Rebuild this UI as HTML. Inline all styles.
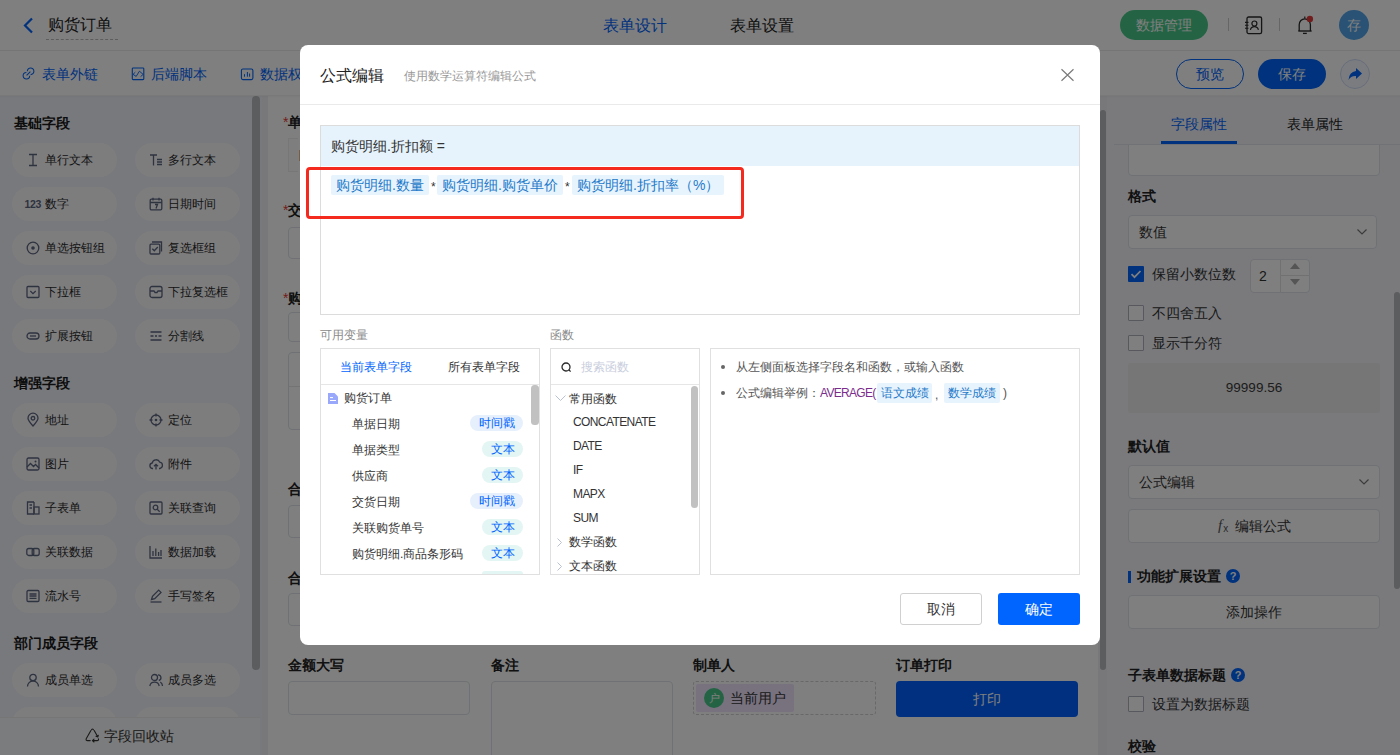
<!DOCTYPE html>
<html><head><meta charset="utf-8">
<style>
*{box-sizing:border-box;margin:0;padding:0}
html,body{width:1400px;height:755px;overflow:hidden;background:#fff;font-family:"Liberation Sans",sans-serif;color:#333;font-size:13px}
.a{position:absolute}
svg{display:block;position:absolute;overflow:visible}
.pill{position:absolute;width:105px;height:34px;border-radius:17px;background:#fbfbfd}
.inp{position:absolute;border:1px solid #dfe2e8;border-radius:4px;background:#fff}
</style></head><body>

<div class="a" style="left:0;top:0;width:1400px;height:51px;background:#fff;border-bottom:1px solid #ebebeb"></div>
<svg style="left:22px;top:17px" width="14" height="17" viewBox="0 0 14 17"><path d="M10 1.5 L3 8.5 L10 15.5" fill="none" stroke="#0064fa" stroke-width="2.2"/></svg>
<div class="a" style="left:48px;top:14.0px;font-size:16px;line-height:22px;color:#222;white-space:nowrap;">购货订单</div>
<div class="a" style="left:46px;top:39px;width:72px;border-top:1px dashed #bbb"></div>
<div class="a" style="left:603px;top:15.0px;font-size:16px;line-height:22px;color:#0064fa;white-space:nowrap;">表单设计</div>
<div class="a" style="left:730px;top:15.0px;font-size:16px;line-height:22px;color:#222;white-space:nowrap;">表单设置</div>
<div class="a" style="left:1120px;top:10px;width:88px;height:30px;border-radius:15px;background:#48c98a;color:#fff;font-size:14px;line-height:30px;text-align:center">数据管理</div>
<div class="a" style="left:1228px;top:18px;width:1px;height:13px;background:#ccc"></div>
<svg style="left:1244px;top:16px" width="19" height="19" viewBox="0 0 19 19"><rect x="3" y="1" width="14.6" height="16.6" rx="1.6" fill="none" stroke="#2a2a2a" stroke-width="1.3"/><circle cx="10.4" cy="7.5" r="2.5" fill="none" stroke="#2a2a2a" stroke-width="1.2"/><path d="M6.4 13.8 A4.1 4.1 0 0 1 14.4 13.8" fill="none" stroke="#2a2a2a" stroke-width="1.2"/><path d="M1 6.4h3.5M1 9.3h3.5M1 12.3h3.5" stroke="#2a2a2a" stroke-width="1.1"/></svg>
<div class="a" style="left:1279px;top:18px;width:1px;height:13px;background:#ccc"></div>
<svg style="left:1296px;top:15px" width="18" height="20" viewBox="0 0 18 20"><path d="M3.2 16 V9.8 A5.6 6 0 0 1 14.4 9.8 V16" fill="none" stroke="#2a2a2a" stroke-width="1.3"/><path d="M2.3 16 H15.6" stroke="#2a2a2a" stroke-width="1.4"/><path d="M8.8 1.6 V3.6" stroke="#2a2a2a" stroke-width="1.2"/><path d="M7 18.4 H10.8" stroke="#2a2a2a" stroke-width="1.3"/><circle cx="13.9" cy="3.9" r="3.2" fill="#e53b3b"/></svg>
<div class="a" style="left:1339px;top:10px;width:30px;height:30px;border-radius:15px;background:#52a4ea;color:#fff;font-size:14px;line-height:30px;text-align:center">存</div>

<div class="a" style="left:0;top:51px;width:1400px;height:45px;background:#fff"></div>
<svg style="left:22px;top:67px" width="13" height="13" viewBox="0 0 13 13"><path d="M5.3 4.3 A3.3 3.3 0 1 1 8.6 7.6" fill="none" stroke="#0064fa" stroke-width="1.05"/><path d="M7.7 8.7 A3.3 3.3 0 1 1 4.4 5.4" fill="none" stroke="#0064fa" stroke-width="1.05"/><path d="M4.6 8.4 L8.4 4.6" stroke="#0064fa" stroke-width="1.05"/></svg>
<div class="a" style="left:42px;top:64.0px;font-size:14px;line-height:20px;color:#0064fa;white-space:nowrap;">表单外链</div>
<svg style="left:131px;top:67px" width="14" height="14" viewBox="0 0 14 14"><rect x="1.3" y="1" width="11.5" height="11.6" rx="0.8" fill="none" stroke="#0064fa" stroke-width="1.1"/><path d="M4.3 5.2 L2 7.4 L5.2 9.4 L8.4 4.2 L12.2 7.4 L9.6 9.6" fill="none" stroke="#0064fa" stroke-width="0.9"/></svg>
<div class="a" style="left:151px;top:64.0px;font-size:14px;line-height:20px;color:#0064fa;white-space:nowrap;">后端脚本</div>
<svg style="left:240px;top:67px" width="14" height="14" viewBox="0 0 14 14"><rect x="1.4" y="2" width="11.5" height="10.6" rx="1.5" fill="none" stroke="#0064fa" stroke-width="1.1"/><path d="M4.5 7.2V9.7M7.4 5V9.7M9.6 6.5V9.7" stroke="#0064fa" stroke-width="1"/></svg>
<div class="a" style="left:260px;top:64.0px;font-size:14px;line-height:20px;color:#0064fa;white-space:nowrap;">数据权限</div>
<div class="a" style="left:1176px;top:59px;width:68px;height:30px;border-radius:15px;border:1px solid #0064fa;color:#0064fa;font-size:14px;line-height:28px;text-align:center">预览</div>
<div class="a" style="left:1258px;top:59px;width:68px;height:30px;border-radius:15px;background:#0064fa;color:#fff;font-size:14px;line-height:30px;text-align:center">保存</div>
<div class="a" style="left:1340px;top:59px;width:30px;height:30px;border-radius:15px;border:1px solid #d0dcf5;background:#f5f8ff"></div>
<svg style="left:1347px;top:66px" width="16" height="16" viewBox="0 0 16 16"><path d="M9 2 L15 7.5 L9 13 L9 10 Q4 9.5 1.5 14 Q2 6 9 5 Z" fill="#0064fa"/></svg>

<div class="a" style="left:0;top:96px;width:262px;height:659px;background:#f0f2f8"></div>
<div class="a" style="left:14px;top:113.0px;font-size:14px;line-height:20px;color:#1a1a1a;font-weight:bold;white-space:nowrap;">基础字段</div>
<div class="pill" style="left:12px;top:143px"></div><svg style="left:26px;top:153px" width="14" height="14" viewBox="0 0 14 14"><path d="M3 1.5h8M3 12.5h8M7 1.5v11" fill="none" stroke="#5d6680" stroke-width="1.3"/></svg><div class="a" style="left:45px;top:151.0px;font-size:12px;line-height:18px;color:#2a2a2a;white-space:nowrap;">单行文本</div>
<div class="pill" style="left:135px;top:143px"></div><svg style="left:149px;top:153px" width="14" height="14" viewBox="0 0 14 14"><path d="M1 2h7M4.5 2v10.5" fill="none" stroke="#5d6680" stroke-width="1.3"/><path d="M8 6.5h5M8 9h5M8 11.5h5" fill="none" stroke="#5d6680" stroke-width="1.3" stroke-width="1.1"/></svg><div class="a" style="left:168px;top:151.0px;font-size:12px;line-height:18px;color:#2a2a2a;white-space:nowrap;">多行文本</div>
<div class="pill" style="left:12px;top:187px"></div><svg style="left:26px;top:197px" width="14" height="14" viewBox="0 0 14 14"><text x="-1.5" y="10.5" font-size="10.5" font-weight="bold" fill="#5d6680" font-family="Liberation Sans" letter-spacing="-0.3">123</text></svg><div class="a" style="left:45px;top:195.0px;font-size:12px;line-height:18px;color:#2a2a2a;white-space:nowrap;">数字</div>
<div class="pill" style="left:135px;top:187px"></div><svg style="left:149px;top:197px" width="14" height="14" viewBox="0 0 14 14"><rect x="1.2" y="2.2" width="11.6" height="10.6" rx="1.2" fill="none" stroke="#5d6680" stroke-width="1.3"/><path d="M4 0.8v2.8M10 0.8v2.8M1.2 5.5h11.6M6 7.5h2.5l-1.5 4" fill="none" stroke="#5d6680" stroke-width="1.3" stroke-width="1.1"/></svg><div class="a" style="left:168px;top:195.0px;font-size:12px;line-height:18px;color:#2a2a2a;white-space:nowrap;">日期时间</div>
<div class="pill" style="left:12px;top:231px"></div><svg style="left:26px;top:241px" width="14" height="14" viewBox="0 0 14 14"><circle cx="7" cy="7" r="5.8" fill="none" stroke="#5d6680" stroke-width="1.3"/><circle cx="7" cy="7" r="1.8" fill="#5d6680"/></svg><div class="a" style="left:45px;top:239.0px;font-size:12px;line-height:18px;color:#2a2a2a;white-space:nowrap;">单选按钮组</div>
<div class="pill" style="left:135px;top:231px"></div><svg style="left:149px;top:241px" width="14" height="14" viewBox="0 0 14 14"><path d="M3 1h9.5v9.5" fill="none" stroke="#5d6680" stroke-width="1.3"/><rect x="1" y="3.2" width="9.8" height="9.8" rx="1" fill="none" stroke="#5d6680" stroke-width="1.3"/><path d="M3.3 7.8l2 2 3.5-3.8" fill="none" stroke="#5d6680" stroke-width="1.3"/></svg><div class="a" style="left:168px;top:239.0px;font-size:12px;line-height:18px;color:#2a2a2a;white-space:nowrap;">复选框组</div>
<div class="pill" style="left:12px;top:275px"></div><svg style="left:26px;top:285px" width="14" height="14" viewBox="0 0 14 14"><rect x="1" y="1.5" width="12" height="11" rx="1" fill="none" stroke="#5d6680" stroke-width="1.3"/><path d="M4.3 6l2.7 2.6 2.7-2.6" fill="none" stroke="#5d6680" stroke-width="1.3"/></svg><div class="a" style="left:45px;top:283.0px;font-size:12px;line-height:18px;color:#2a2a2a;white-space:nowrap;">下拉框</div>
<div class="pill" style="left:135px;top:275px"></div><svg style="left:149px;top:285px" width="14" height="14" viewBox="0 0 14 14"><rect x="1" y="1.5" width="12" height="11" rx="2" fill="none" stroke="#5d6680" stroke-width="1.3"/><path d="M1 6h4l1 1.5h2l1-1.5h4" fill="none" stroke="#5d6680" stroke-width="1.3"/></svg><div class="a" style="left:168px;top:283.0px;font-size:12px;line-height:18px;color:#2a2a2a;white-space:nowrap;">下拉复选框</div>
<div class="pill" style="left:12px;top:319px"></div><svg style="left:26px;top:329px" width="14" height="14" viewBox="0 0 14 14"><rect x="1" y="4" width="12" height="6" rx="3" fill="none" stroke="#5d6680" stroke-width="1.3"/><path d="M4 7h6" fill="none" stroke="#5d6680" stroke-width="1.3"/></svg><div class="a" style="left:45px;top:327.0px;font-size:12px;line-height:18px;color:#2a2a2a;white-space:nowrap;">扩展按钮</div>
<div class="pill" style="left:135px;top:319px"></div><svg style="left:149px;top:329px" width="14" height="14" viewBox="0 0 14 14"><path d="M1.5 3h11M1.5 11h11" fill="none" stroke="#5d6680" stroke-width="1.3"/><path d="M1.5 7h3M6 7h2M9.5 7h3" fill="none" stroke="#5d6680" stroke-width="1.3"/></svg><div class="a" style="left:168px;top:327.0px;font-size:12px;line-height:18px;color:#2a2a2a;white-space:nowrap;">分割线</div>
<div class="a" style="left:14px;top:373.0px;font-size:14px;line-height:20px;color:#1a1a1a;font-weight:bold;white-space:nowrap;">增强字段</div>
<div class="pill" style="left:12px;top:403px"></div><svg style="left:26px;top:413px" width="14" height="14" viewBox="0 0 14 14"><path d="M7 13 C3 8.5 2 6.8 2 5.2 A5 5 0 0 1 12 5.2 C12 6.8 11 8.5 7 13Z" fill="none" stroke="#5d6680" stroke-width="1.3"/><circle cx="7" cy="5.3" r="1.8" fill="none" stroke="#5d6680" stroke-width="1.3"/></svg><div class="a" style="left:45px;top:411.0px;font-size:12px;line-height:18px;color:#2a2a2a;white-space:nowrap;">地址</div>
<div class="pill" style="left:135px;top:403px"></div><svg style="left:149px;top:413px" width="14" height="14" viewBox="0 0 14 14"><circle cx="7" cy="7" r="5" fill="none" stroke="#5d6680" stroke-width="1.3"/><circle cx="7" cy="7" r="1.3" fill="#5d6680"/><path d="M7 0.5v3M7 10.5v3M0.5 7h3M10.5 7h3" fill="none" stroke="#5d6680" stroke-width="1.3"/></svg><div class="a" style="left:168px;top:411.0px;font-size:12px;line-height:18px;color:#2a2a2a;white-space:nowrap;">定位</div>
<div class="pill" style="left:12px;top:447px"></div><svg style="left:26px;top:457px" width="14" height="14" viewBox="0 0 14 14"><rect x="1" y="1" width="12" height="12" rx="1.5" fill="none" stroke="#5d6680" stroke-width="1.3"/><path d="M1 10l3.5-3.5 3 3 2-2 3.5 3.5" fill="none" stroke="#5d6680" stroke-width="1.3"/><circle cx="9.5" cy="4.5" r="1" fill="#5d6680"/></svg><div class="a" style="left:45px;top:455.0px;font-size:12px;line-height:18px;color:#2a2a2a;white-space:nowrap;">图片</div>
<div class="pill" style="left:135px;top:447px"></div><svg style="left:149px;top:457px" width="14" height="14" viewBox="0 0 14 14"><path d="M4 11.5H3.2A2.8 2.8 0 0 1 3.2 6 A4 4 0 0 1 10.8 5.2 A3.2 3.2 0 0 1 10.8 11.5H10" fill="none" stroke="#5d6680" stroke-width="1.3"/><path d="M7 12.5V7.5M5 9.3l2-2 2 2" fill="none" stroke="#5d6680" stroke-width="1.3"/></svg><div class="a" style="left:168px;top:455.0px;font-size:12px;line-height:18px;color:#2a2a2a;white-space:nowrap;">附件</div>
<div class="pill" style="left:12px;top:491px"></div><svg style="left:26px;top:501px" width="14" height="14" viewBox="0 0 14 14"><path d="M8 1H1.5v12H8M8 1v12" fill="none" stroke="#5d6680" stroke-width="1.3"/><rect x="8" y="6" width="5" height="7" fill="none" stroke="#5d6680" stroke-width="1.3"/><path d="M3.5 4h2.5M3.5 7h2.5" fill="none" stroke="#5d6680" stroke-width="1.3"/></svg><div class="a" style="left:45px;top:499.0px;font-size:12px;line-height:18px;color:#2a2a2a;white-space:nowrap;">子表单</div>
<div class="pill" style="left:135px;top:491px"></div><svg style="left:149px;top:501px" width="14" height="14" viewBox="0 0 14 14"><rect x="1" y="1" width="12" height="12" rx="1" fill="none" stroke="#5d6680" stroke-width="1.3"/><circle cx="6.5" cy="6.5" r="2.3" fill="none" stroke="#5d6680" stroke-width="1.3"/><path d="M8.2 8.2l2.5 2.5" fill="none" stroke="#5d6680" stroke-width="1.3"/></svg><div class="a" style="left:168px;top:499.0px;font-size:12px;line-height:18px;color:#2a2a2a;white-space:nowrap;">关联查询</div>
<div class="pill" style="left:12px;top:535px"></div><svg style="left:26px;top:545px" width="14" height="14" viewBox="0 0 14 14"><rect x="0.8" y="3.5" width="7" height="7" rx="2" fill="none" stroke="#5d6680" stroke-width="1.3"/><rect x="6.2" y="3.5" width="7" height="7" rx="2" fill="none" stroke="#5d6680" stroke-width="1.3"/></svg><div class="a" style="left:45px;top:543.0px;font-size:12px;line-height:18px;color:#2a2a2a;white-space:nowrap;">关联数据</div>
<div class="pill" style="left:135px;top:535px"></div><svg style="left:149px;top:545px" width="14" height="14" viewBox="0 0 14 14"><path d="M1 1v12h12" fill="none" stroke="#5d6680" stroke-width="1.3"/><path d="M4 11V6M6.8 11V3.5M9.6 11V7M12 11V5" fill="none" stroke="#5d6680" stroke-width="1.3"/></svg><div class="a" style="left:168px;top:543.0px;font-size:12px;line-height:18px;color:#2a2a2a;white-space:nowrap;">数据加载</div>
<div class="pill" style="left:12px;top:579px"></div><svg style="left:26px;top:589px" width="14" height="14" viewBox="0 0 14 14"><rect x="1" y="1.5" width="12" height="11" rx="1.2" fill="none" stroke="#5d6680" stroke-width="1.3"/><path d="M3.5 5h7M3.5 7h7M3.5 9.3h7" fill="none" stroke="#5d6680" stroke-width="1.3" stroke-width="1.1"/></svg><div class="a" style="left:45px;top:587.0px;font-size:12px;line-height:18px;color:#2a2a2a;white-space:nowrap;">流水号</div>
<div class="pill" style="left:135px;top:579px"></div><svg style="left:149px;top:589px" width="14" height="14" viewBox="0 0 14 14"><path d="M2.5 10.5l1-3.2 6.2-6.2 2.3 2.3-6.3 6.2z" fill="none" stroke="#5d6680" stroke-width="1.3"/><path d="M1.5 13h11" fill="none" stroke="#5d6680" stroke-width="1.3"/></svg><div class="a" style="left:168px;top:587.0px;font-size:12px;line-height:18px;color:#2a2a2a;white-space:nowrap;">手写签名</div>
<div class="a" style="left:14px;top:633.0px;font-size:14px;line-height:20px;color:#1a1a1a;font-weight:bold;white-space:nowrap;">部门成员字段</div>
<div class="pill" style="left:12px;top:663px"></div><svg style="left:26px;top:673px" width="14" height="14" viewBox="0 0 14 14"><circle cx="7" cy="4.5" r="3.2" fill="none" stroke="#5d6680" stroke-width="1.3"/><path d="M1.5 13.5 A5.5 5.5 0 0 1 12.5 13.5" fill="none" stroke="#5d6680" stroke-width="1.3"/></svg><div class="a" style="left:45px;top:671.0px;font-size:12px;line-height:18px;color:#2a2a2a;white-space:nowrap;">成员单选</div>
<div class="pill" style="left:135px;top:663px"></div><svg style="left:149px;top:673px" width="14" height="14" viewBox="0 0 14 14"><circle cx="5.5" cy="4.5" r="3" fill="none" stroke="#5d6680" stroke-width="1.3"/><path d="M0.8 13 A4.8 4.8 0 0 1 10.2 13" fill="none" stroke="#5d6680" stroke-width="1.3"/><path d="M9 1.8 A2.9 2.9 0 0 1 9.8 7.5 M11.3 9 A4.8 4.8 0 0 1 13.5 13" fill="none" stroke="#5d6680" stroke-width="1.3"/></svg><div class="a" style="left:168px;top:671.0px;font-size:12px;line-height:18px;color:#2a2a2a;white-space:nowrap;">成员多选</div>
<div class="pill" style="left:12px;top:707px"></div><svg style="left:26px;top:717px" width="14" height="14" viewBox="0 0 14 14"></svg><div class="a" style="left:45px;top:715.0px;font-size:12px;line-height:18px;color:#2a2a2a;white-space:nowrap;"></div>
<div class="pill" style="left:135px;top:707px"></div><svg style="left:149px;top:717px" width="14" height="14" viewBox="0 0 14 14"></svg><div class="a" style="left:168px;top:715.0px;font-size:12px;line-height:18px;color:#2a2a2a;white-space:nowrap;"></div>
<div class="a" style="left:252px;top:96px;width:8px;height:574px;border-radius:4px;background:#b9babd"></div>
<div class="a" style="left:0;top:717px;width:260px;height:38px;background:#f7f8fa;border-top:1px solid #ececec"></div>
<svg style="left:85px;top:728px" width="15" height="15" viewBox="0 0 15 15"><path d="M5.9 2.6 L1.2 10.8 Q0.6 12.6 2.6 12.6 H5.2 M9.2 2.6 L12.6 8.6 M11 8.3 L12.8 9 L13.3 7.2 M13.4 10.8 Q14 12.6 12 12.6 H7.6 M9 11.2 L7.4 12.6 L9 14 M6.6 1.6 Q7.5 0.5 8.4 1.6" fill="none" stroke="#333" stroke-width="1.1" stroke-linejoin="round" stroke-linecap="round"/></svg>
<div class="a" style="left:104px;top:726.0px;font-size:14px;line-height:20px;color:#333;white-space:nowrap;">字段回收站</div>
<div class="a" style="left:262px;top:96px;width:846px;height:659px;background:#f0f1f4"></div>
<div class="a" style="left:268px;top:96px;width:830px;height:659px;background:#fff"></div>
<div class="a" style="left:283px;top:112px;font-size:14px;line-height:20px;font-weight:bold;color:#222;white-space:nowrap"><span style="color:#e53935;font-weight:normal">*</span>单据日期</div>
<div class="a" style="left:288px;top:138px;width:10px;height:34px;border:1px solid #eeeeee;border-right:none;background:#fcfcfc"></div>
<div class="a" style="left:299px;top:150px;width:1px;height:11px;background:#f0b888"></div>
<div class="a" style="left:283px;top:200px;font-size:14px;line-height:20px;font-weight:bold;color:#222;white-space:nowrap"><span style="color:#e53935;font-weight:normal">*</span>交货日期</div>
<div class="inp" style="left:288px;top:227px;width:400px;height:32px"></div>
<div class="a" style="left:283px;top:288px;font-size:14px;line-height:20px;font-weight:bold;color:#222;white-space:nowrap"><span style="color:#e53935;font-weight:normal">*</span>购货明细</div>
<div class="inp" style="left:288px;top:312px;width:400px;height:30px"></div>
<div class="inp" style="left:288px;top:352px;width:780px;height:78px;border-radius:4px"></div>
<div class="a" style="left:289px;top:386px;width:778px;height:1px;background:#e8e8e8"></div>
<div class="a" style="left:288px;top:479.0px;font-size:14px;line-height:20px;color:#222;font-weight:bold;white-space:nowrap;">合计数量</div>
<div class="inp" style="left:288px;top:505px;width:400px;height:33px"></div>
<div class="a" style="left:288px;top:568.0px;font-size:14px;line-height:20px;color:#222;font-weight:bold;white-space:nowrap;">合计金额</div>
<div class="inp" style="left:288px;top:593px;width:400px;height:33px"></div>
<div class="a" style="left:288px;top:655.0px;font-size:14px;line-height:20px;color:#222;font-weight:bold;white-space:nowrap;">金额大写</div>
<div class="inp" style="left:288px;top:681px;width:182px;height:34px"></div>
<div class="a" style="left:491px;top:655.0px;font-size:14px;line-height:20px;color:#222;font-weight:bold;white-space:nowrap;">备注</div>
<div class="inp" style="left:491px;top:681px;width:182px;height:100px"></div>
<div class="a" style="left:693px;top:655.0px;font-size:14px;line-height:20px;color:#222;font-weight:bold;white-space:nowrap;">制单人</div>
<div class="a" style="left:693px;top:681px;width:183px;height:34px;border:1px dashed #d0d0d0;border-radius:3px"></div>
<div class="a" style="left:696px;top:684px;width:98px;height:28px;background:#f0e4ff;border-radius:2px"></div>
<div class="a" style="left:704px;top:688px;width:20px;height:20px;border-radius:10px;background:#48c98a;color:#fff;font-size:11px;line-height:20px;text-align:center">户</div>
<div class="a" style="left:730px;top:688.0px;font-size:14px;line-height:20px;color:#333;white-space:nowrap;">当前用户</div>
<div class="a" style="left:896px;top:655.0px;font-size:14px;line-height:20px;color:#222;font-weight:bold;white-space:nowrap;">订单打印</div>
<div class="a" style="left:896px;top:681px;width:182px;height:36px;border-radius:4px;background:#0060ff;color:#fff;font-size:14px;line-height:36px;text-align:center">打印</div>
<div class="a" style="left:1100px;top:110px;width:6px;height:560px;border-radius:3px;background:#b9babd"></div>
<div class="a" style="left:1107px;top:96px;width:293px;height:659px;background:#f4f5fa"></div>
<div class="inp" style="left:1128px;top:140px;width:252px;height:36px"></div>
<div class="a" style="left:1107px;top:96px;width:293px;height:48px;background:#f4f5fa"></div>
<div class="a" style="left:1114px;top:144px;width:286px;height:1px;background:#e3e5ea"></div>
<div class="a" style="left:1171px;top:114.0px;font-size:14px;line-height:20px;color:#0064fa;white-space:nowrap;">字段属性</div>
<div class="a" style="left:1287px;top:114.0px;font-size:14px;line-height:20px;color:#222;white-space:nowrap;">表单属性</div>
<div class="a" style="left:1161px;top:141px;width:76px;height:3px;background:#0064fa"></div>
<div class="a" style="left:1128px;top:186.0px;font-size:14px;line-height:20px;color:#222;font-weight:bold;white-space:nowrap;">格式</div>
<div class="inp" style="left:1128px;top:215px;width:249px;height:34px"></div>
<div class="a" style="left:1139px;top:222.0px;font-size:14px;line-height:20px;color:#333;white-space:nowrap;">数值</div>
<svg style="left:1357px;top:229px" width="10" height="6" viewBox="0 0 10 6"><path d="M0.5 0.5L5 5 9.5 0.5" fill="none" stroke="#777" stroke-width="1.2"/></svg>
<div class="a" style="left:1128px;top:266px;width:16px;height:16px;border-radius:1px;background:#0064fa"></div>
<svg style="left:1130px;top:268px" width="12" height="12" viewBox="0 0 12 12"><path d="M1.5 6.2l3 3 6-6.2" fill="none" stroke="#fff" stroke-width="1.7"/></svg>
<div class="a" style="left:1152px;top:264.0px;font-size:14px;line-height:20px;color:#333;white-space:nowrap;">保留小数位数</div>
<div class="inp" style="left:1250px;top:259px;width:60px;height:34px"></div>
<div class="a" style="left:1280px;top:260px;width:1px;height:32px;background:#e3e3e3"></div>
<div class="a" style="left:1281px;top:275px;width:28px;height:1px;background:#e3e3e3"></div>
<div class="a" style="left:1259px;top:266.0px;font-size:14px;line-height:20px;color:#333;white-space:nowrap;">2</div>
<svg style="left:1290px;top:263px" width="10" height="6" viewBox="0 0 10 6"><path d="M0 6L5 0 10 6Z" fill="#aaa"/></svg>
<svg style="left:1290px;top:279px" width="10" height="6" viewBox="0 0 10 6"><path d="M0 0L5 6 10 0Z" fill="#aaa"/></svg>
<div class="a" style="left:1128px;top:305px;width:16px;height:16px;border:1px solid #b0b3bd;border-radius:1px;background:#fff"></div><div class="a" style="left:1152px;top:303.0px;font-size:14px;line-height:20px;color:#333;white-space:nowrap;">不四舍五入</div>
<div class="a" style="left:1128px;top:335px;width:16px;height:16px;border:1px solid #b0b3bd;border-radius:1px;background:#fff"></div><div class="a" style="left:1152px;top:333.0px;font-size:14px;line-height:20px;color:#333;white-space:nowrap;">显示千分符</div>
<div class="a" style="left:1128px;top:363px;width:252px;height:50px;background:#ececed;border-radius:2px"></div>
<div class="a" style="left:1128px;top:378px;width:252px;font-size:13.5px;line-height:20px;text-align:center;color:#3a3a3a">99999.56</div>
<div class="a" style="left:1128px;top:436.0px;font-size:14px;line-height:20px;color:#222;font-weight:bold;white-space:nowrap;">默认值</div>
<div class="inp" style="left:1128px;top:465px;width:252px;height:34px"></div>
<div class="a" style="left:1139px;top:472.0px;font-size:14px;line-height:20px;color:#333;white-space:nowrap;">公式编辑</div>
<svg style="left:1359px;top:479px" width="10" height="6" viewBox="0 0 10 6"><path d="M0.5 0.5L5 5 9.5 0.5" fill="none" stroke="#777" stroke-width="1.2"/></svg>
<div class="inp" style="left:1128px;top:509px;width:252px;height:34px"></div>
<div class="a" style="left:1218px;top:516px;font-family:'Liberation Serif',serif;font-style:italic;font-size:15px;line-height:18px;color:#555">f<span style="font-size:10px;font-style:normal;font-family:'Liberation Sans';position:relative;top:2px;left:1px">x</span></div>
<div class="a" style="left:1235px;top:516.0px;font-size:14px;line-height:20px;color:#333;white-space:nowrap;">编辑公式</div>
<div class="a" style="left:1128px;top:571px;width:3px;height:12px;background:#0064fa"></div>
<div class="a" style="left:1137px;top:566.0px;font-size:14px;line-height:20px;color:#222;font-weight:bold;white-space:nowrap;">功能扩展设置</div>
<div class="a" style="left:1226px;top:569px;width:14px;height:14px;border-radius:7px;background:#0064fa;color:#fff;font-size:11px;line-height:14px;text-align:center;font-weight:bold">?</div>
<div class="inp" style="left:1128px;top:595px;width:252px;height:34px"></div>
<div class="a" style="left:1128px;top:602px;width:252px;font-size:14px;line-height:20px;text-align:center;color:#333">添加操作</div>
<div class="a" style="left:1128px;top:665.0px;font-size:14px;line-height:20px;color:#222;font-weight:bold;white-space:nowrap;">子表单数据标题</div>
<div class="a" style="left:1231px;top:668px;width:14px;height:14px;border-radius:7px;background:#0064fa;color:#fff;font-size:11px;line-height:14px;text-align:center;font-weight:bold">?</div>
<div class="a" style="left:1128px;top:696px;width:16px;height:16px;border:1px solid #b0b3bd;border-radius:1px;background:#fff"></div><div class="a" style="left:1152px;top:694.0px;font-size:14px;line-height:20px;color:#333;white-space:nowrap;">设置为数据标题</div>
<div class="a" style="left:1128px;top:736.0px;font-size:14px;line-height:20px;color:#222;font-weight:bold;white-space:nowrap;">校验</div>
<div class="a" style="left:1394px;top:292px;width:6px;height:297px;border-radius:3px;background:#b9babd"></div>
<div class="a" style="left:0;top:95px;width:1400px;height:1px;background:rgba(0,0,0,.05)"></div>
<div class="a" style="left:0;top:96px;width:1400px;height:2px;background:linear-gradient(rgba(0,0,0,.035),rgba(0,0,0,0))"></div>
<div class="a" style="left:0;top:0;width:1400px;height:755px;background:rgba(0,0,0,.5)"></div>
<div class="a" style="left:300px;top:45px;width:800px;height:600px;background:#fff;border-radius:8px"></div>
<div class="a" style="left:320px;top:65.0px;font-size:16px;line-height:22px;color:#222;white-space:nowrap;">公式编辑</div>
<div class="a" style="left:404px;top:67.0px;font-size:12px;line-height:18px;color:#999;white-space:nowrap;">使用数学运算符编辑公式</div>
<svg style="left:1061px;top:69px" width="13" height="12" viewBox="0 0 13 12"><path d="M0.5 0.3L12.5 11.7M12.5 0.3L0.5 11.7" stroke="#7a7a7a" stroke-width="1.2"/></svg>
<div class="a" style="left:300px;top:104px;width:800px;height:1px;background:#eaeaea"></div>
<div class="a" style="left:320px;top:125px;width:760px;height:190px;border:1px solid #dcdcdc"></div>
<div class="a" style="left:321px;top:126px;width:758px;height:40px;background:#e6f3fd"></div>
<div class="a" style="left:331px;top:136.0px;font-size:14px;line-height:20px;color:#333;white-space:nowrap;">购货明细.折扣额 =</div>
<div class="a" style="left:331px;top:175.0px;width:98px;height:20px;background:#e8f4fd;border-radius:2px"></div><div class="a" style="left:336px;top:175.0px;font-size:14px;line-height:20px;color:#1f7ac9;white-space:nowrap;">购货明细.数量</div>
<div class="a" style="left:431px;top:178.0px;font-size:12px;line-height:18px;color:#333;white-space:nowrap;">*</div>
<div class="a" style="left:437px;top:175.0px;width:126px;height:20px;background:#e8f4fd;border-radius:2px"></div><div class="a" style="left:442px;top:175.0px;font-size:14px;line-height:20px;color:#1f7ac9;white-space:nowrap;">购货明细.购货单价</div>
<div class="a" style="left:565px;top:178.0px;font-size:12px;line-height:18px;color:#333;white-space:nowrap;">*</div>
<div class="a" style="left:572px;top:175.0px;width:152px;height:20px;background:#e8f4fd;border-radius:2px"></div><div class="a" style="left:577px;top:175.0px;font-size:14px;line-height:20px;color:#1f7ac9;white-space:nowrap;">购货明细.折扣率（%）</div>
<div class="a" style="left:306px;top:167px;width:438px;height:52px;border:3px solid #f52a1e;border-radius:4px"></div>
<div class="a" style="left:320px;top:326.0px;font-size:12px;line-height:18px;color:#8a8a8a;white-space:nowrap;">可用变量</div>
<div class="a" style="left:550px;top:326.0px;font-size:12px;line-height:18px;color:#8a8a8a;white-space:nowrap;">函数</div>
<div class="a" style="left:320px;top:348px;width:220px;height:227px;border:1px solid #e0e0e0"></div>
<div class="a" style="left:340px;top:358.0px;font-size:12px;line-height:18px;color:#0064ff;white-space:nowrap;">当前表单字段</div>
<div class="a" style="left:448px;top:358.0px;font-size:12px;line-height:18px;color:#333;white-space:nowrap;">所有表单字段</div>
<div class="a" style="left:321px;top:384px;width:218px;height:1px;background:#e6e6e6"></div>
<svg style="left:328px;top:393px" width="10" height="11" viewBox="0 0 10 11"><path d="M0 0H6.5L10 3.5V11H0Z" fill="#9aa8fb"/><path d="M2 4.6h3M2 7.5h6" stroke="#fff" stroke-width="1"/></svg>
<div class="a" style="left:344px;top:389.0px;font-size:12px;line-height:18px;color:#333;white-space:nowrap;">购货订单</div>
<div class="a" style="left:352px;top:415.0px;font-size:12px;line-height:18px;color:#333;white-space:nowrap;">单据日期</div>
<div class="a" style="left:470px;top:415px;width:53px;height:16px;border-radius:8px;background:#e6f0fd;color:#0064ff;font-size:12px;line-height:16px;text-align:center">时间戳</div>
<div class="a" style="left:352px;top:441.0px;font-size:12px;line-height:18px;color:#333;white-space:nowrap;">单据类型</div>
<div class="a" style="left:482px;top:441px;width:41px;height:16px;border-radius:8px;background:#e3f6f3;color:#0064ff;font-size:12px;line-height:16px;text-align:center">文本</div>
<div class="a" style="left:352px;top:467.0px;font-size:12px;line-height:18px;color:#333;white-space:nowrap;">供应商</div>
<div class="a" style="left:482px;top:467px;width:41px;height:16px;border-radius:8px;background:#e3f6f3;color:#0064ff;font-size:12px;line-height:16px;text-align:center">文本</div>
<div class="a" style="left:352px;top:493.0px;font-size:12px;line-height:18px;color:#333;white-space:nowrap;">交货日期</div>
<div class="a" style="left:470px;top:493px;width:53px;height:16px;border-radius:8px;background:#e6f0fd;color:#0064ff;font-size:12px;line-height:16px;text-align:center">时间戳</div>
<div class="a" style="left:352px;top:519.0px;font-size:12px;line-height:18px;color:#333;white-space:nowrap;">关联购货单号</div>
<div class="a" style="left:482px;top:519px;width:41px;height:16px;border-radius:8px;background:#e3f6f3;color:#0064ff;font-size:12px;line-height:16px;text-align:center">文本</div>
<div class="a" style="left:352px;top:545.0px;font-size:12px;line-height:18px;color:#333;white-space:nowrap;">购货明细.商品条形码</div>
<div class="a" style="left:482px;top:545px;width:41px;height:16px;border-radius:8px;background:#e3f6f3;color:#0064ff;font-size:12px;line-height:16px;text-align:center">文本</div>
<div class="a" style="left:482px;top:571px;width:41px;height:3px;border-radius:8px 8px 0 0;background:#e3f6f3"></div>
<div class="a" style="left:531px;top:385px;width:7.5px;height:40px;border-radius:3.5px;background:#c1c1c1"></div>
<div class="a" style="left:550px;top:348px;width:150px;height:227px;border:1px solid #e0e0e0"></div>
<svg style="left:561px;top:362px" width="11" height="11" viewBox="0 0 11 11"><circle cx="5" cy="5" r="4" fill="none" stroke="#2a2a2a" stroke-width="1.3"/><path d="M7.8 7.8l1.8 1.8" stroke="#2a2a2a" stroke-width="1.3"/></svg>
<div class="a" style="left:581px;top:358.0px;font-size:12px;line-height:18px;color:#c9cedd;white-space:nowrap;">搜索函数</div>
<div class="a" style="left:551px;top:384px;width:148px;height:1px;background:#e6e6e6"></div>
<svg style="left:555px;top:395px" width="11" height="6" viewBox="0 0 11 6"><path d="M0.5 0.5L5.5 5.5 10.5 0.5" fill="none" stroke="#b9c1d6" stroke-width="1"/></svg>
<div class="a" style="left:569px;top:390.0px;font-size:12px;line-height:18px;color:#333;white-space:nowrap;">常用函数</div>
<div class="a" style="left:573px;top:413.0px;font-size:12px;line-height:18px;color:#333;white-space:nowrap;letter-spacing:-0.6px">CONCATENATE</div>
<div class="a" style="left:573px;top:437.0px;font-size:12px;line-height:18px;color:#333;white-space:nowrap;letter-spacing:-0.6px">DATE</div>
<div class="a" style="left:573px;top:461.0px;font-size:12px;line-height:18px;color:#333;white-space:nowrap;letter-spacing:-0.6px">IF</div>
<div class="a" style="left:573px;top:485.0px;font-size:12px;line-height:18px;color:#333;white-space:nowrap;letter-spacing:-0.6px">MAPX</div>
<div class="a" style="left:573px;top:509.0px;font-size:12px;line-height:18px;color:#333;white-space:nowrap;letter-spacing:-0.6px">SUM</div>
<svg style="left:557px;top:538px" width="5" height="9" viewBox="0 0 5 9"><path d="M0.5 0.5L4.5 4.5 0.5 8.5" fill="none" stroke="#b9c1d6" stroke-width="1"/></svg>
<div class="a" style="left:569px;top:533.0px;font-size:12px;line-height:18px;color:#333;white-space:nowrap;">数学函数</div>
<svg style="left:557px;top:562px" width="5" height="9" viewBox="0 0 5 9"><path d="M0.5 0.5L4.5 4.5 0.5 8.5" fill="none" stroke="#b9c1d6" stroke-width="1"/></svg>
<div class="a" style="left:569px;top:557.0px;font-size:12px;line-height:18px;color:#333;white-space:nowrap;">文本函数</div>
<div class="a" style="left:691px;top:386px;width:7px;height:122px;border-radius:3.5px;background:#c1c1c1"></div>
<div class="a" style="left:710px;top:348px;width:370px;height:227px;border:1px solid #e0e0e0"></div>
<div class="a" style="left:721px;top:365px;width:4px;height:4px;border-radius:2px;background:#666"></div>
<div class="a" style="left:736px;top:358.0px;font-size:12px;line-height:18px;color:#555;white-space:nowrap;">从左侧面板选择字段名和函数，或输入函数</div>
<div class="a" style="left:721px;top:391px;width:4px;height:4px;border-radius:2px;background:#666"></div>
<div class="a" style="left:736px;top:384.0px;font-size:12px;line-height:18px;color:#555;white-space:nowrap;">公式编辑举例：<span style="color:#7b2d8b;letter-spacing:-0.7px">AVERAGE(</span></div>
<div class="a" style="left:877px;top:383px;width:55px;height:20px;background:#e8f4fd;border-radius:2px"></div>
<div class="a" style="left:881px;top:384.0px;font-size:12px;line-height:18px;color:#1f7ac9;white-space:nowrap;">语文成绩</div>
<div class="a" style="left:935px;top:386.0px;font-size:12px;line-height:18px;color:#555;white-space:nowrap;">,</div>
<div class="a" style="left:944px;top:383px;width:56px;height:20px;background:#e8f4fd;border-radius:2px"></div>
<div class="a" style="left:948px;top:384.0px;font-size:12px;line-height:18px;color:#1f7ac9;white-space:nowrap;">数学成绩</div>
<div class="a" style="left:1003px;top:384.0px;font-size:12px;line-height:18px;color:#555;white-space:nowrap;">)</div>
<div class="a" style="left:900px;top:593px;width:82px;height:32px;border:1px solid #d0d0d0;border-radius:3px;font-size:14px;line-height:30px;text-align:center;color:#333">取消</div>
<div class="a" style="left:998px;top:593px;width:82px;height:32px;border-radius:3px;background:#0064ff;font-size:14px;line-height:32px;text-align:center;color:#fff">确定</div>
</body></html>
